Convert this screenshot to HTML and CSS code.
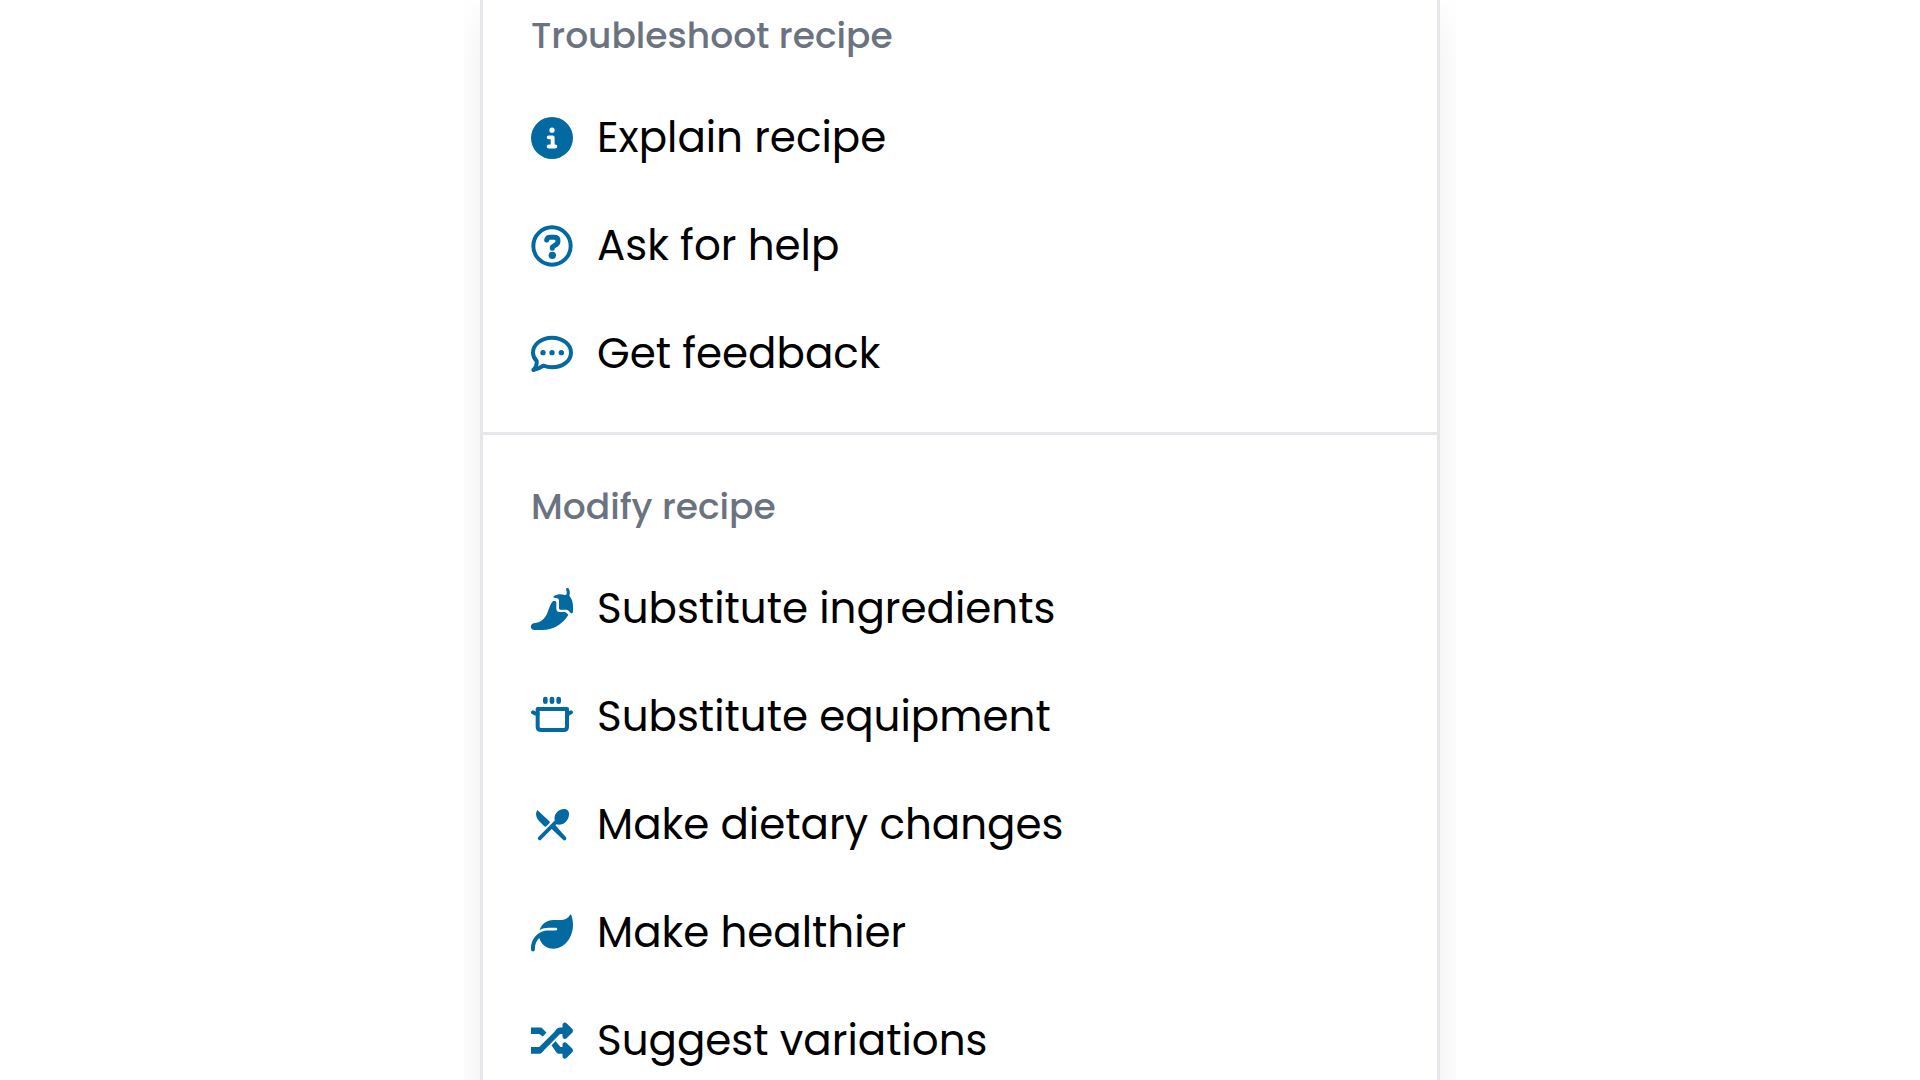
FILE: index.html
```html
<!DOCTYPE html>
<html lang="en">
<head>
<meta charset="utf-8">
<meta name="viewport" content="width=device-width, initial-scale=1">
<title>Recipe actions</title>
<link rel="stylesheet" href="styles.css">
</head>
<body>
<main class="stage">
  <div class="menu">
    <section class="group" aria-labelledby="troubleshoot">
      <h2 class="group-title" id="troubleshoot">Troubleshoot recipe</h2>
      <ul class="actions">
        <li><button class="action" type="button">
          <svg class="icon" viewBox="0 0 512 512" aria-hidden="true"><path d="M256 512A256 256 0 1 0 256 0a256 256 0 1 0 0 512zM216 336h24V272H216c-13.300 0-24-10.700-24-24s10.700-24 24-24h48c13.300 0 24 10.700 24 24v88h8c13.300 0 24 10.700 24 24s-10.700 24-24 24H216c-13.300 0-24-10.700-24-24s10.700-24 24-24zm40-208a32 32 0 1 1 0 64 32 32 0 1 1 0-64z"/></svg>
          <span>Explain recipe</span></button></li>
        <li><button class="action" type="button">
          <svg class="icon" viewBox="0 0 126 126" aria-hidden="true"><circle class="line" cx="63" cy="63" r="56" stroke-width="12"/><path class="line" stroke-width="15" d="M47 45C49 38 52 37 57 37H69C77 37 81 41 81 47C81 53 79 56 75 59L64 66V70"/><circle cx="64" cy="91" r="11"/></svg>
          <span>Ask for help</span></button></li>
        <li><button class="action" type="button">
          <svg class="icon" viewBox="0 0 126 126" aria-hidden="true"><path class="line" stroke-width="12" d="M17 84C9 76 6 68 6 59C6 34 32 14 63 14S120 34 120 59S94 103 63 103C53 103 45 101 37 98C29 104 19 109 7 111C15 103 18 94 17 84Z"/><circle cx="36" cy="59" r="8"/><circle cx="63" cy="59" r="8"/><circle cx="91" cy="59" r="8"/></svg>
          <span>Get feedback</span></button></li>
      </ul>
    </section>
    <section class="group" aria-labelledby="modify">
      <h2 class="group-title" id="modify">Modify recipe</h2>
      <ul class="actions">
        <li><button class="action" type="button">
          <svg class="icon" viewBox="0 0 126 126" aria-hidden="true"><path d="M105 4C106-1 113-1 114 4C117 10 117 17 115 23C122 31 126 41 126 55V70C126 76 122 78 119 75L111 67Q109 65 105 65H88Q84 65 84 61V38Q84 32 79 31L69 29Q65 27 69 24C79 18 91 18 101 21Q106 22 107 17Q108 12 105 4Z"/><path d="M66 39H72Q76 40 76 44V62Q76 71 85 72H101Q105 73 108 76L112 81C95 109 66 126 33 126H10C-3 126-4 109 8 106C34 103 44 90 52 67C56 56 59 47 66 39Z"/></svg>
          <span>Substitute ingredients</span></button></li>
        <li><button class="action" type="button">
          <svg class="icon" viewBox="0 0 126 126" aria-hidden="true"><path class="line" stroke-width="12" d="M20 39H108V92Q108 102 98 102H31Q20 102 20 92Z"/><path class="line" stroke-width="12" d="M6 49Q12 54 20 53M120 49Q114 54 108 53"/><path class="line" stroke-width="14" d="M43 9V17M63 9V17M83 9V17"/></svg>
          <span>Substitute equipment</span></button></li>
        <li><button class="action" type="button">
          <svg class="icon" viewBox="0 0 126 126" aria-hidden="true"><path d="M19 18L55 52Q58 55 55 58L46 67Q43 70 39 66L27 54C15 42 12 29 19 18ZM70 60L105 100Q108 104 104 108Q100 111 96 107L60 73Z"/><path class="line" stroke-width="11" d="M26 103L82 47"/><path d="M73 55C65 36 76 18 98 15C108 14 115 21 114 32C112 53 94 66 76 61Z"/></svg>
          <span>Make dietary changes</span></button></li>
        <li><button class="action" type="button">
          <svg class="icon" viewBox="0 0 512 512" aria-hidden="true"><path d="M272 96c-78.600 0-145.100 51.500-167.700 122.500c33.600-17 71.500-26.500 111.700-26.500h88c8.800 0 16 7.200 16 16s-7.200 16-16 16H288 216s0 0 0 0c-16.600 0-32.700 1.900-48.300 5.400c-25.900 5.900-49.900 16.400-71.400 30.700c0 0 0 0 0 0C38.300 298.800 0 364.900 0 440v16c0 13.300 10.700 24 24 24s24-10.700 24-24V440c0-48.700 20.700-92.500 53.800-123.200C121.600 392.300 190.300 448 272 448l1 0c132.100-.7 239-130.900 239-291.400c0-42.600-7.500-83.100-21.100-119.600c-2.600-6.900-12.700-6.600-16.200-.1C455.900 72.100 418.700 96 376 96L272 96z"/></svg>
          <span>Make healthier</span></button></li>
        <li><button class="action" type="button">
          <svg class="icon" viewBox="0 -24 512 512" aria-hidden="true"><path d="M0 66H126L188 128L145 178L98 148H0ZM0 306H100L278 128C302 104 315 66 354 66H384V37C384 10 412-2 433 15L502 84C515 97 515 117 502 130L433 199C412 218 384 204 384 177V148H354L164 338C142 363 128 388 100 388H0ZM250 284L300 234L360 306H384V277C384 250 412 238 433 255L502 324C515 337 515 357 502 370L433 439C412 458 384 444 384 417V388H342C326 388 316 378 306 366Z"/></svg>
          <span>Suggest variations</span></button></li>
      </ul>
    </section>
  </div>
</main>
</body>
</html>
```
FILE: styles.css
```css
* { box-sizing: border-box; }
html { scrollbar-width: none; }
body {
  margin: 0;
  background: #fff;
  color: #000;
  font-family: Poppins, Inter, sans-serif;
}
.stage {
  max-width: 992px;
  margin: 0 auto;
  padding: 0 16px;
  overflow: hidden;
}
.menu {
  min-height: 100vh;
  border: solid #e5e7eb;
  border-width: 0 3px;
  background: #fff;
  box-shadow: 0 12px 45px -9px rgba(0, 0, 0, 0.1);
}
.group { padding: 6px 0 24px; }
.group + .group {
  padding-top: 42px;
  border-top: 3px solid #e5e7eb;
}
.group-title {
  margin: 0;
  padding: 0 48px 18px;
  color: #6b7280;
  font-size: 36px;
  font-weight: 500;
  line-height: 60px;
}
.actions {
  margin: 0;
  padding: 0;
  list-style: none;
}
.action {
  display: flex;
  align-items: center;
  gap: 24px;
  width: 100%;
  padding: 24px 48px;
  border: 0;
  background: none;
  color: inherit;
  font: inherit;
  font-size: 42px;
  line-height: 60px;
  text-align: left;
  cursor: pointer;
}
.icon {
  flex: none;
  width: 42px;
  height: 42px;
  fill: #0369a1;
  overflow: visible;
}
.icon .line {
  fill: none;
  stroke: #0369a1;
  stroke-linecap: round;
  stroke-linejoin: round;
}
```
